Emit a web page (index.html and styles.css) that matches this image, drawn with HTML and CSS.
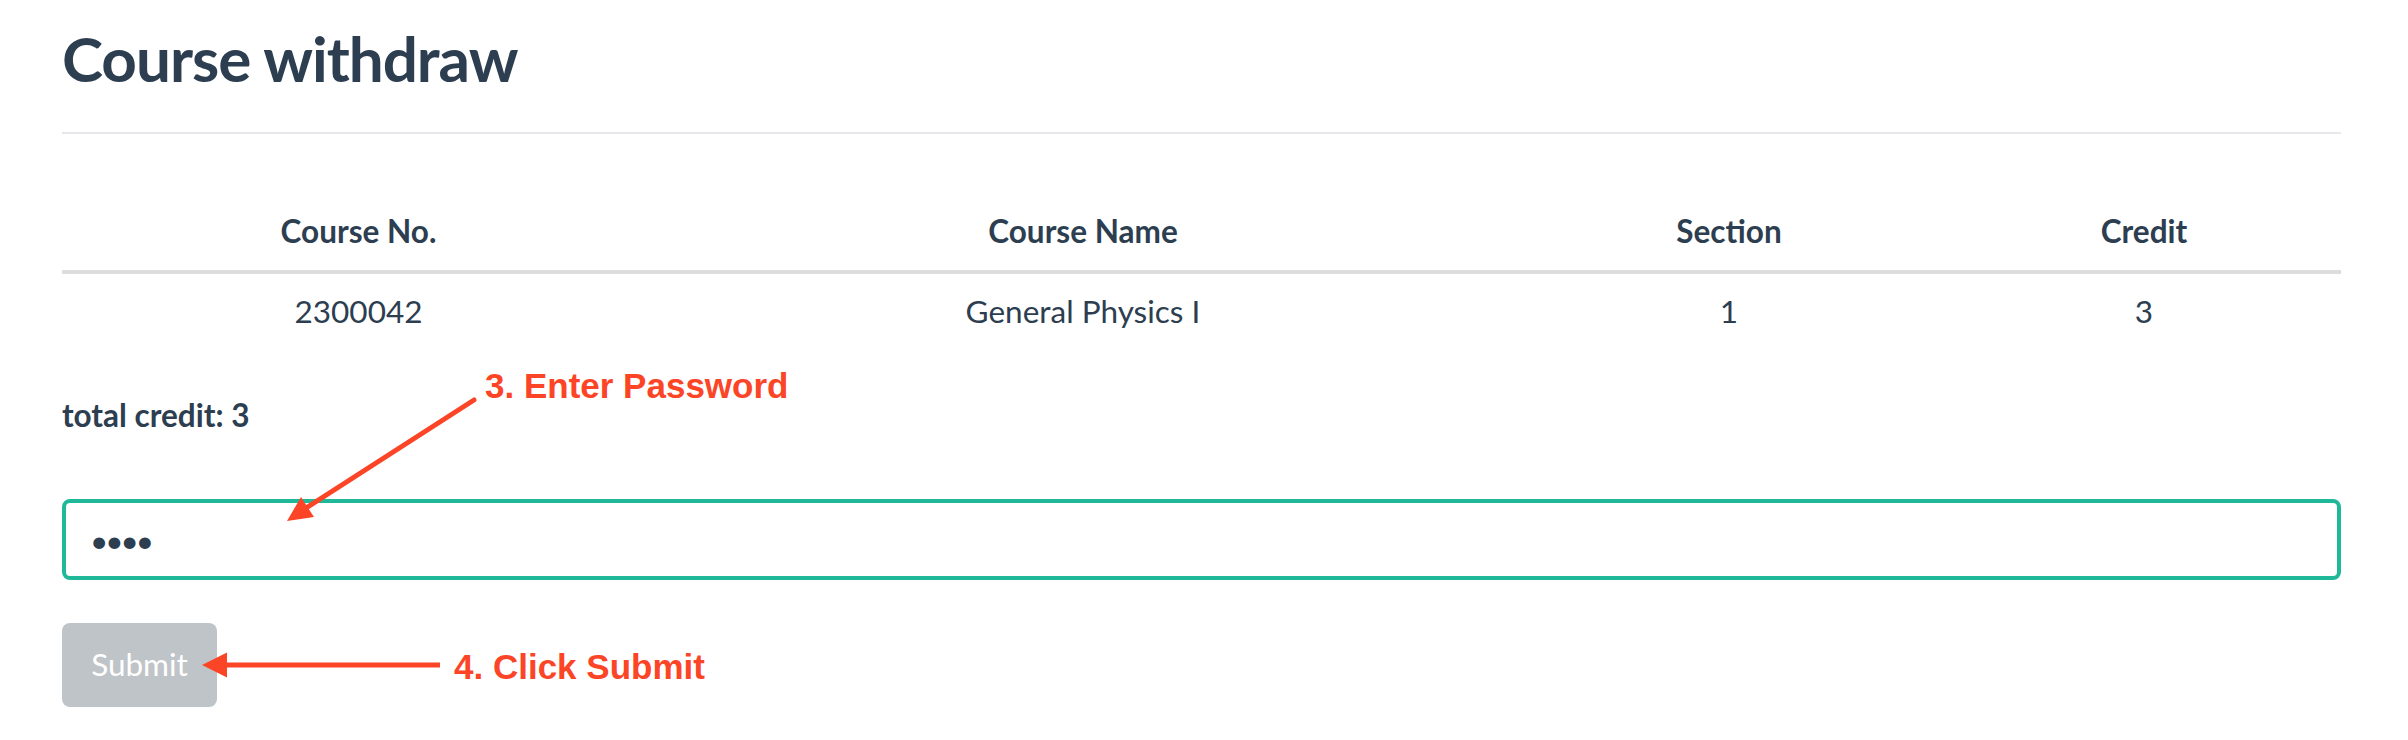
FILE: index.html
```html
<!DOCTYPE html>
<html lang="en">
<head>
<meta charset="utf-8">
<title>Course withdraw</title>
<link rel="stylesheet" href="styles.css">
</head>
<body>
<div class="page">
  <div class="page-header">
    <h2 class="title">Course withdraw</h2>
  </div>

  <table class="courses">
    <colgroup>
      <col class="c-no">
      <col class="c-name">
      <col class="c-sec">
      <col class="c-cr">
    </colgroup>
    <thead>
      <tr>
        <th>Course No.</th>
        <th>Course Name</th>
        <th>Section</th>
        <th>Credit</th>
      </tr>
    </thead>
    <tbody>
      <tr>
        <td>2300042</td>
        <td>General Physics I</td>
        <td>1</td>
        <td>3</td>
      </tr>
    </tbody>
  </table>

  <p class="total">total credit: 3</p>

  <form class="withdraw-form" onsubmit="return false">
    <input class="pw" type="password" value="abcd" aria-label="Password">
    <button class="submit" type="submit" disabled>Submit</button>
  </form>

  <div class="annot annot-3">3. Enter Password</div>
  <div class="annot annot-4">4. Click Submit</div>

  <svg class="arrows" width="2408" height="740" viewBox="0 0 2408 740" aria-hidden="true">
    <line x1="474" y1="400" x2="306" y2="508" stroke="#fb4526" stroke-width="5" stroke-linecap="round"/>
    <polygon points="287,521 301,497 314,517" fill="#fb4526"/>
    <line x1="440" y1="665" x2="224" y2="665" stroke="#fb4526" stroke-width="5"/>
    <polygon points="202,665 227,652.5 227,677.5" fill="#fb4526"/>
  </svg>
</div>
</body>
</html>
```

FILE: styles.css
```css
html, body {
  margin: 0;
  padding: 0;
  background: #ffffff;
}

body {
  font-family: Lato, "Open Sans", "Liberation Sans", sans-serif;
  font-size: 31.5px;
  color: #2c3e50;
}

.page {
  position: relative;
  width: 2279px;
  padding: 24px 0 0 62px;
  height: 716px;
}

.page-header {
  padding-bottom: 39px;
  border-bottom: 2px solid #e6e8ec;
}

.title {
  margin: 0;
  font-size: 62px;
  letter-spacing: -1px;
  line-height: 69px;
  font-weight: 700;
  color: #2c3e50;
}

.courses {
  margin-top: 57px;
  width: 2279px;
  border-collapse: collapse;
  table-layout: fixed;
}

.c-no { width: 593px; }
.c-name { width: 856px; }
.c-sec { width: 436px; }
.c-cr { width: 394px; }

.courses th {
  font-weight: 700;
  line-height: 44px;
  padding: 18px 16px 17px;
  text-align: center;
  border-bottom: 4px solid #dddddd;
}

.courses td {
  font-weight: 400;
  line-height: 44px;
  padding: 15px 16px 17px;
  text-align: center;
}

.total {
  margin: 43px 0 0;
  font-weight: 700;
  line-height: 44px;
}

.withdraw-form {
  margin: 0;
}

.pw {
  display: block;
  box-sizing: border-box;
  margin-top: 62px;
  width: 2279px;
  height: 81px;
  padding: 0 24px;
  border: 4px solid #1fb999;
  border-radius: 8px;
  outline: none;
  font-family: Lato, "Open Sans", sans-serif;
  font-size: 31.5px;
  letter-spacing: -3px;
  color: #2c3e50;
  background: #ffffff;
}

.submit {
  display: block;
  margin-top: 43px;
  width: 155px;
  height: 84px;
  padding: 0 0 3px;
  border: none;
  border-radius: 8px;
  background: #bfc4c8;
  color: #ffffff;
  font-family: Lato, "Open Sans", sans-serif;
  font-size: 31.5px;
  font-weight: 400;
}

.annot {
  position: absolute;
  font-family: "Liberation Sans", Arial, sans-serif;
  font-weight: 700;
  font-size: 35px;
  line-height: 35px;
  color: #fb4526;
  white-space: nowrap;
}

.annot-3 {
  left: 485px;
  top: 368px;
}

.annot-4 {
  left: 454px;
  top: 649px;
}

.arrows {
  position: absolute;
  left: 0;
  top: 0;
  pointer-events: none;
}
```
